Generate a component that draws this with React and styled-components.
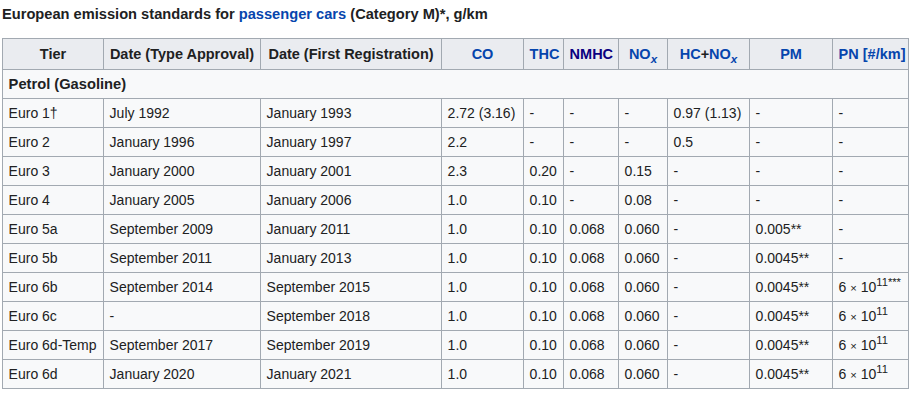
import React from "react";
import styled, { createGlobalStyle } from "styled-components";

const GlobalStyle = createGlobalStyle`
  html, body {
    margin: 0;
    padding: 0;
    background: #ffffff;
  }
  body {
    font-family: "Liberation Sans", Arial, sans-serif;
    font-size: 14px;
    color: #202122;
  }
`;

const Wrapper = styled.div`
  padding: 3px 0 0 2px;
`;

const Table = styled.table`
  border-collapse: collapse;
  table-layout: fixed;
  width: 907px;
  background: #f8f9fa;
  border: 1px solid #a2a9b1;
  color: #202122;
  line-height: 22.4px;
`;

const Caption = styled.caption`
  text-align: left;
  font-weight: bold;
  font-size: 14.65px;
  padding: 0 0 13px 0;
  background: #ffffff;
  white-space: nowrap;
`;

const HeadCell = styled.th`
  background: #eaecf0;
  border: 1px solid #a2a9b1;
  padding: 2.8px 5.6px;
  text-align: center;
  font-weight: bold;
  font-size: 14.5px;
  white-space: nowrap;
  height: 24px;
`;

const GroupCell = styled.th`
  background: #f8f9fa;
  border: 1px solid #a2a9b1;
  padding: 2.8px 5.6px;
  text-align: left;
  font-weight: bold;
  font-size: 14.7px;
`;

const Cell = styled.td`
  border: 1px solid #a2a9b1;
  padding: 2.8px 5.6px;
  white-space: nowrap;
`;

const Link = styled.a`
  color: ${(p) => (p.$visited ? "#0b0080" : "#0645ad")};
  text-decoration: none;
`;

const Sub = styled.sub`
  font-size: 0.8em;
  line-height: 1;
  font-style: italic;
`;

const Sup = styled.sup`
  font-size: 0.8em;
  line-height: 1;
`;

const Times = styled.span`
  font-size: 0.8em;
  line-height: 1;
`;

const widths = [101, 157, 181, 82, 40, 55, 49, 82, 83, 76];

const NOx = () => (
  <Link href="#">
    NO<Sub>x</Sub>
  </Link>
);

const headers = [
  "Tier",
  "Date (Type Approval)",
  "Date (First Registration)",
  <Link href="#">CO</Link>,
  <Link href="#">THC</Link>,
  <Link href="#" $visited>NMHC</Link>,
  <NOx />,
  <>
    <Link href="#">HC</Link>+<NOx />
  </>,
  <Link href="#">PM</Link>,
  <Link href="#">PN [#/km]</Link>,
];

const PN = ({ note }) => (
  <>
    6 <Times>×</Times> 10<Sup>{"11" + (note || "")}</Sup>
  </>
);

const rows = [
  ["Euro 1†", "July 1992", "January 1993", "2.72 (3.16)", "-", "-", "-", "0.97 (1.13)", "-", "-"],
  ["Euro 2", "January 1996", "January 1997", "2.2", "-", "-", "-", "0.5", "-", "-"],
  ["Euro 3", "January 2000", "January 2001", "2.3", "0.20", "-", "0.15", "-", "-", "-"],
  ["Euro 4", "January 2005", "January 2006", "1.0", "0.10", "-", "0.08", "-", "-", "-"],
  ["Euro 5a", "September 2009", "January 2011", "1.0", "0.10", "0.068", "0.060", "-", "0.005**", "-"],
  ["Euro 5b", "September 2011", "January 2013", "1.0", "0.10", "0.068", "0.060", "-", "0.0045**", "-"],
  ["Euro 6b", "September 2014", "September 2015", "1.0", "0.10", "0.068", "0.060", "-", "0.0045**", <PN note="***" />],
  ["Euro 6c", "-", "September 2018", "1.0", "0.10", "0.068", "0.060", "-", "0.0045**", <PN />],
  ["Euro 6d-Temp", "September 2017", "September 2019", "1.0", "0.10", "0.068", "0.060", "-", "0.0045**", <PN />],
  ["Euro 6d", "January 2020", "January 2021", "1.0", "0.10", "0.068", "0.060", "-", "0.0045**", <PN />],
];

const App = () => {
  return (
    <Wrapper>
      <GlobalStyle />
      <Table>
        <Caption>
          European emission standards for <Link href="#">passenger cars</Link> (Category M)*, g/km
        </Caption>
        <colgroup>
          {widths.map((w, i) => (
            <col key={i} style={{ width: w }} />
          ))}
        </colgroup>
        <thead>
          <tr>
            {headers.map((h, i) => (
              <HeadCell key={i}>{h}</HeadCell>
            ))}
          </tr>
        </thead>
        <tbody>
          <tr>
            <GroupCell colSpan={10}>Petrol (Gasoline)</GroupCell>
          </tr>
          {rows.map((r, i) => (
            <tr key={i}>
              {r.map((c, j) => (
                <Cell key={j}>{c}</Cell>
              ))}
            </tr>
          ))}
        </tbody>
      </Table>
    </Wrapper>
  );
};

export default App;
